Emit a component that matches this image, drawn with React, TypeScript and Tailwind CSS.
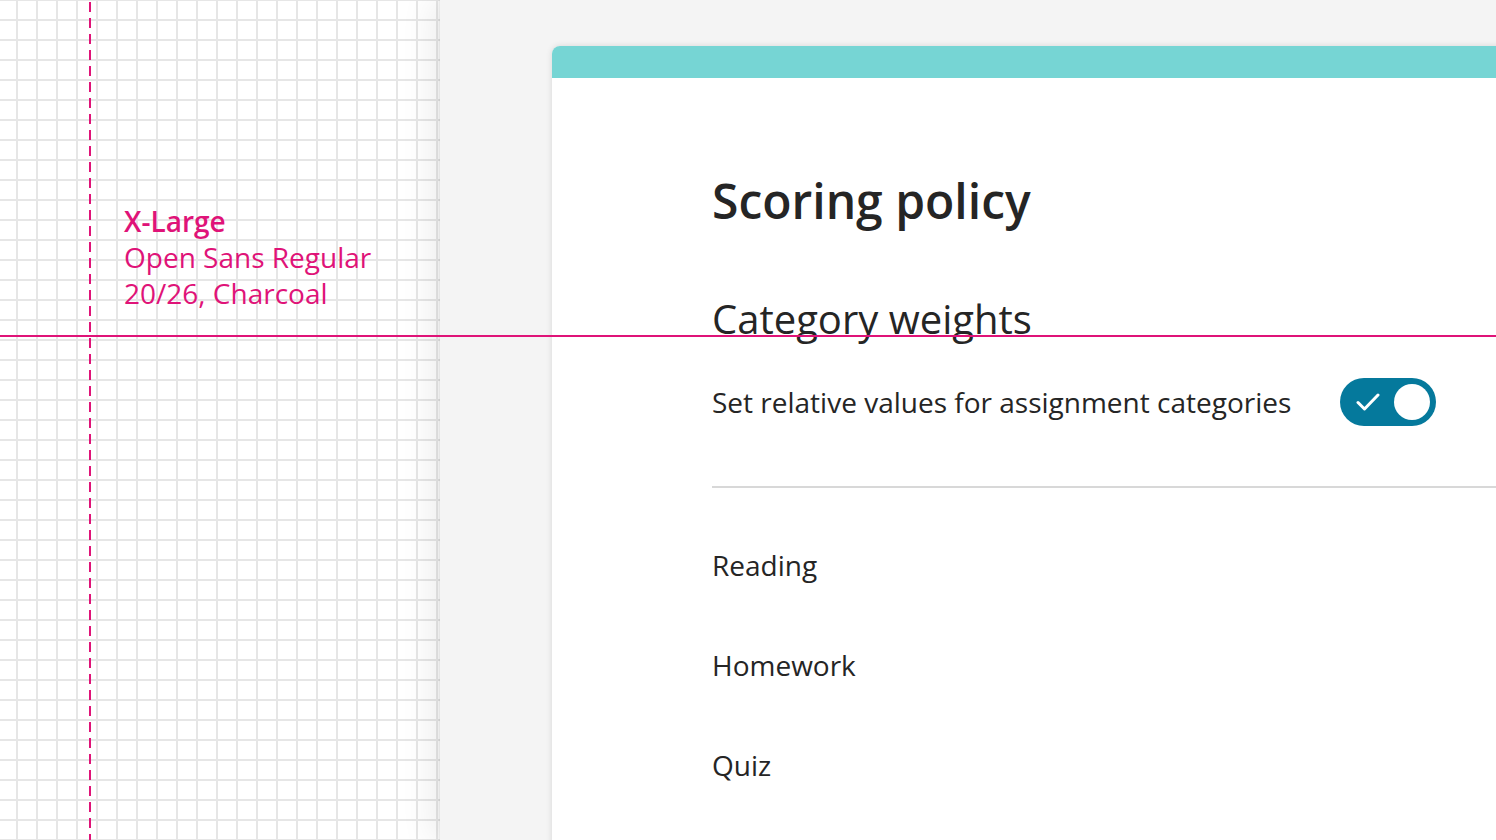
import React from "react";

type Category = {
  id: number;
  name: string;
};

function Toggle() {
  return (
    <div className="flex h-[48px] w-[96px] shrink-0 items-center justify-between rounded-full bg-[#05799c] pl-[16px] pr-[6px]">
      <svg width="24" height="20" viewBox="0 0 24 20" fill="none">
        <path
          d="M2 10.5 L8.5 17 L22 3"
          stroke="white"
          strokeWidth="3"
          strokeLinecap="round"
          strokeLinejoin="round"
        />
      </svg>
      <div className="h-[36px] w-[36px] rounded-full bg-white" />
    </div>
  );
}

function App() {
  const categories: Category[] = [
    { id: 1, name: "Reading" },
    { id: 2, name: "Homework" },
    { id: 3, name: "Quiz" },
  ];

  return (
    <div className="relative flex h-[840px] w-[1496px] overflow-hidden font-['Open_Sans',sans-serif]">
      {/* spec grid */}
      <div className="h-full w-[440px] shrink-0 bg-white bg-[linear-gradient(to_right,#e6e6e6_2px,transparent_2px),linear-gradient(to_bottom,#e6e6e6_2px,transparent_2px)] bg-size-[20px_20px] bg-position-[16px_19px]">
        <div className="pl-[124px] pt-[203px] text-[28px] leading-[36px] text-[#df1378]">
          <div className="font-semibold">X-Large</div>
          <div>Open Sans Regular</div>
          <div>20/26, Charcoal</div>
        </div>
      </div>

      {/* page */}
      <div className="relative z-10 flex min-w-0 flex-1 overflow-hidden bg-[#f4f4f4] pl-[112px] pt-[46px] shadow-[-1px_0_2px_rgba(0,0,0,0.08),-10px_0_30px_rgba(0,0,0,0.07)]">
        <div className="h-[900px] w-[1100px] shrink-0 rounded-tl-lg bg-white shadow-[0_0_6px_rgba(0,0,0,0.12)]">
          <div className="h-8 rounded-tl-lg bg-[#76d5d4]" />
          <div className="pl-[160px] pt-[91px] text-[#252525]">
            <h1 className="text-[48px] leading-[64px] font-semibold">Scoring policy</h1>
            <h2 className="mt-[60px] text-[40px] leading-[52px]">Category weights</h2>
            <div className="mt-[33px] flex w-[724px] items-center justify-between">
              <span className="text-[28px] leading-[36px]">
                Set relative values for assignment categories
              </span>
              <Toggle />
            </div>
            <div className="mt-[60px] h-[2px] bg-[#d8d8d8]" />
            <div className="flex flex-col gap-[64px] pt-[59px] text-[28px] leading-[36px]">
              {categories.map((item) => (
                <div key={item.id}>{item.name}</div>
              ))}
            </div>
          </div>
        </div>
      </div>

      {/* guide lines */}
      <div className="absolute left-[89px] top-[2px] z-20 h-full w-[2px] bg-[repeating-linear-gradient(to_bottom,#df1378_0_10px,transparent_10px_16px)]" />
      <div className="absolute left-0 top-[335px] z-20 h-[2px] w-full bg-[#df1378]" />
    </div>
  );
}

export default App;
